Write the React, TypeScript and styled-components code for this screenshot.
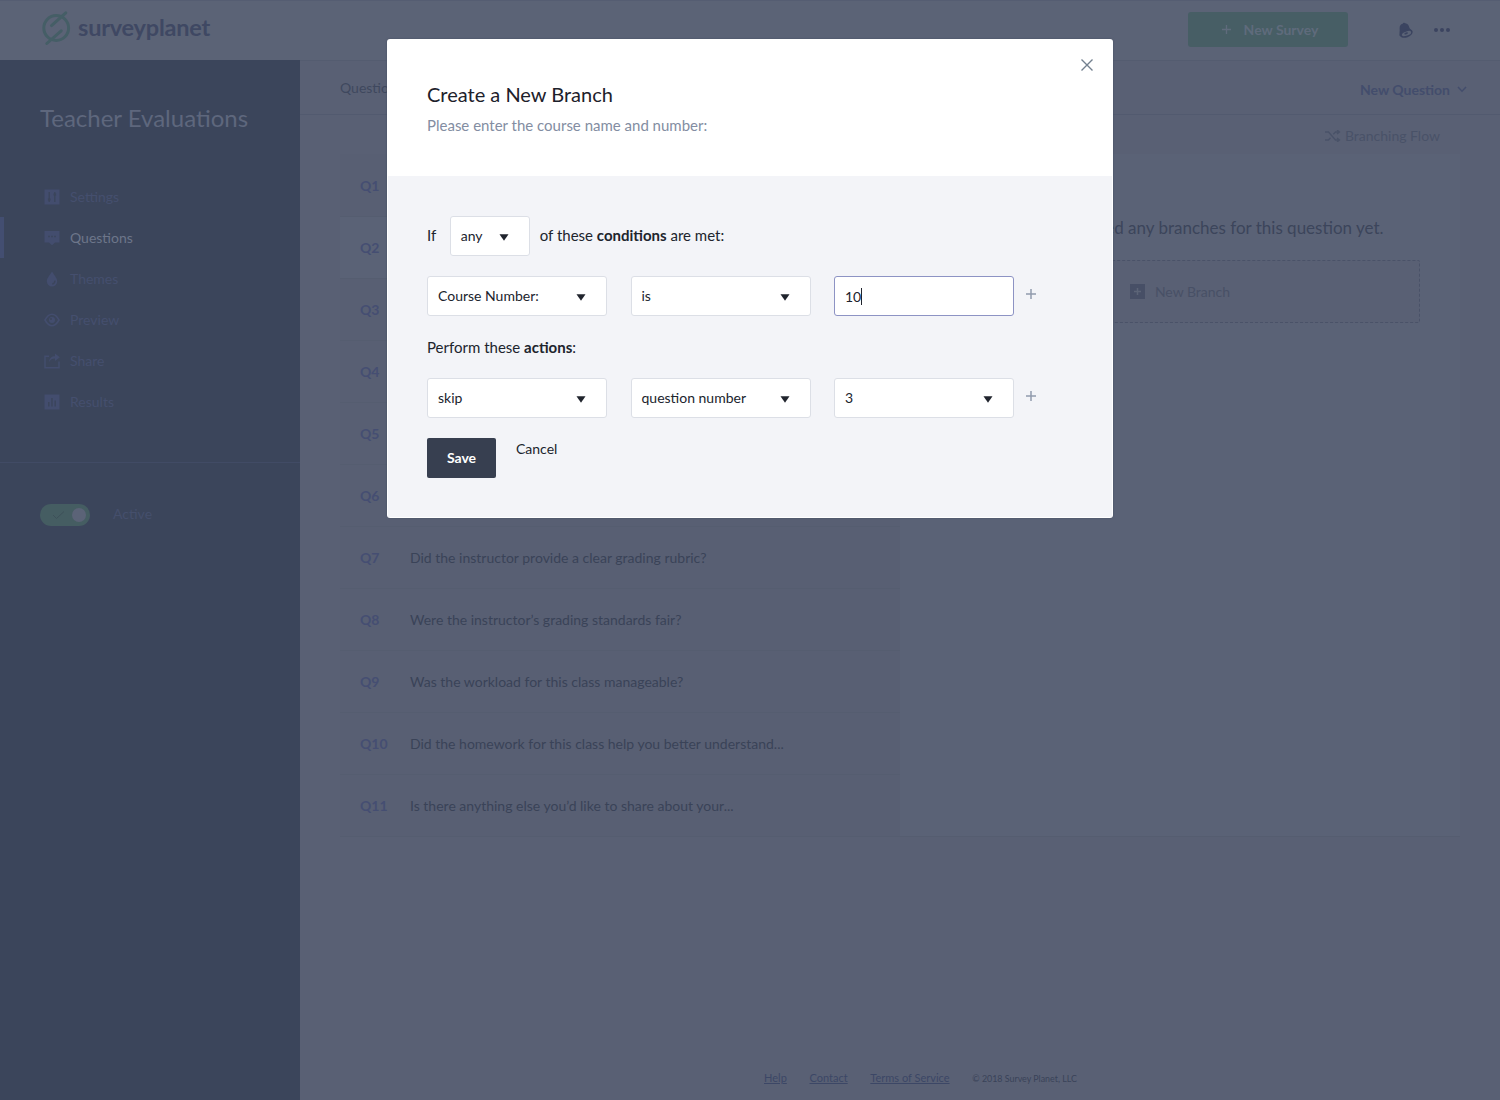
import React from 'react';
import styled, { createGlobalStyle } from 'styled-components';

const Global = createGlobalStyle`
  *, *::before, *::after { box-sizing: border-box; }
  html, body { margin: 0; padding: 0; }
  body {
    font-family: Lato, "Open Sans", sans-serif;
    font-size: 14px;
    line-height: 20px;
    color: #3d465c;
    overflow: hidden;
  }
  button, input { font: inherit; }
`;

const Page = styled.div`
  display: flex;
  flex-direction: column;
  width: 1500px;
  height: 1100px;
  background: #596074;
  position: relative;
  overflow: hidden;
`;

const TopBar = styled.header`
  display: flex;
  align-items: center;
  justify-content: space-between;
  flex: none;
  height: 60px;
  padding: 0 48px 0 40px;
  background: #5b6376;
  box-shadow: inset 0 1px 0 #555d72;
`;

const Brand = styled.div`
  display: flex;
  align-items: center;
  gap: 6px;
  padding-bottom: 4px;
`;

const BrandName = styled.span`
  padding-bottom: 3px;
  font-size: 23.5px;
  line-height: 30px;
  font-weight: 700;
  letter-spacing: -0.2px;
  color: #3f4863;
`;

const TopActions = styled.div`
  display: flex;
  align-items: center;
`;

const NewSurvey = styled.button`
  display: flex;
  align-items: center;
  justify-content: center;
  gap: 13px;
  width: 160px;
  height: 35px;
  margin: 0 50px 1px 0;
  padding: 0 0 0 4px;
  border: 0;
  border-radius: 3px;
  background: #475e65;
  color: #5f6b7c;
  font-weight: 700;
`;

const BellWrap = styled.span`
  display: flex;
  margin-right: 18px;
`;

const Body = styled.div`
  display: flex;
  flex: 1;
`;

const Sidebar = styled.aside`
  width: 300px;
  flex: none;
  background: #3b455b;
`;

const SurveyTitle = styled.h1`
  margin: 0;
  padding: 42px 40px 0;
  height: 116px;
  font-size: 24px;
  line-height: 32px;
  font-weight: 400;
  color: #5e677d;
`;

const Nav = styled.nav`
  display: flex;
  flex-direction: column;
  height: 287px;
  border-bottom: 1px solid #414b65;
`;

const NavItem = styled.a<{ $active?: boolean }>`
  display: flex;
  align-items: center;
  gap: 10px;
  height: 41px;
  padding-left: 40px;
  border-left: 4px solid ${(p) => (p.$active ? '#434e71' : 'transparent')};
  color: ${(p) => (p.$active ? '#6d768a' : '#454f6e')};

  svg { color: #434d6e; }
`;

const StatusRow = styled.div`
  display: flex;
  align-items: center;
  gap: 23px;
  padding: 41px 40px 0;
  color: #454f6c;
`;

const StatusText = styled.span`
  padding-bottom: 2px;
`;

const Toggle = styled.span`
  display: flex;
  align-items: center;
  justify-content: space-between;
  width: 50px;
  height: 22px;
  padding: 0 4px 0 12px;
  border-radius: 11px;
  background: #455d62;
`;

const Knob = styled.span`
  width: 14px;
  height: 14px;
  border-radius: 50%;
  background: #5b6377;
`;

const Main = styled.main`
  display: flex;
  flex-direction: column;
  flex: 1;
`;

const SubBar = styled.div`
  display: flex;
  align-items: center;
  justify-content: space-between;
  height: 55px;
  padding: 0 33px 0 40px;
  border-top: 1px solid #545c70;
  border-bottom: 1px solid #525a6f;
`;

const Crumb = styled.span`
  padding-top: 1px;
  color: #3f485e;
`;

const NewQuestion = styled.a`
  display: flex;
  align-items: center;
  gap: 7px;
  padding-top: 5px;
  font-weight: 700;
  color: #434d6c;

  svg { margin-bottom: 2px; }
`;

const FlowLink = styled.div`
  display: flex;
  align-items: center;
  justify-content: flex-end;
  gap: 4px;
  height: 39px;
  padding: 3px 60px 0 0;
  color: #495268;
`;

const Columns = styled.div`
  display: flex;
  height: 683px;
  margin: 0 40px;
`;

const List = styled.ul`
  width: 560px;
  margin: 0;
  padding: 1px 0 0;
  list-style: none;
  background: #585f73;
`;

const Question = styled.li<{ $selected?: boolean }>`
  display: flex;
  align-items: center;
  height: 62px;
  padding: 0 20px;
  background: ${(p) => (p.$selected ? '#5a6276' : '#585f73')};
  border-bottom: 1px solid #555d70;
  color: #3a4358;
`;

const Number = styled.b`
  width: 50px;
  color: #454e72;
`;

const Branches = styled.section`
  width: 560px;
  padding: 64px 40px 0;
  background: #5a6276;
  border-bottom: 1px solid #555d70;
`;

const Empty = styled.p`
  margin: 0 0 22px;
  font-size: 17px;
  line-height: 20px;
  text-align: center;
  white-space: nowrap;
  color: #3c455b;
`;

const NewBranch = styled.div`
  display: flex;
  align-items: center;
  justify-content: center;
  gap: 10px;
  height: 63px;
  border: 1px dashed #4a5268;
  border-radius: 2px;
  background: #596074;
  color: #485066;
`;

const Footer = styled.footer`
  display: flex;
  align-items: center;
  margin-top: auto;
  height: 44px;
  padding-left: 464px;
  gap: 22.7px;
  font-size: 11px;
  color: #3a4359;
`;

const FootLink = styled.a`
  color: #3c4766;
  text-decoration: underline;
`;

const Copy = styled.span`
  padding-top: 1px;
  font-size: 8.9px;
`;

const Overlay = styled.div`
  position: absolute;
  inset: 0;
  display: flex;
  align-items: flex-start;
  justify-content: center;
  padding-top: 39px;
`;

const Modal = styled.div`
  display: flex;
  flex-direction: column;
  width: 726px;
  height: 479px;
  overflow: hidden;
  border-radius: 3px;
  background: #fff;
  box-shadow: 0 0 2px #434c60;
  color: #20242d;
`;

const ModalHead = styled.div`
  display: flex;
  justify-content: space-between;
  height: 137px;
  padding: 0 20px 0 40px;
`;

const ModalTitle = styled.h2`
  margin: 42px 0 8px;
  font-size: 20px;
  line-height: 26px;
  font-weight: 400;
  color: #1d212b;
`;

const ModalText = styled.p`
  margin: 0;
  font-size: 15px;
  line-height: 20px;
  color: #838da2;
`;

const Close = styled.button`
  display: flex;
  align-self: flex-start;
  margin-top: 20px;
  padding: 0;
  border: 0;
  background: none;
  color: #73808f;
`;

const ModalBody = styled.div`
  flex: 1;
  margin: 0 1px 1px;
  padding: 40px 39px 0;
  background: #f3f4f8;
`;

const Line = styled.div<{ $gap: number }>`
  display: flex;
  align-items: center;
  gap: ${(p) => p.$gap}px;
  height: 40px;
`;

const Phrase = styled.span<{ $after?: number }>`
  margin-right: ${(p) => p.$after ?? 0}px;
  padding-bottom: 2px;
  font-size: 15px;
`;

const Select = styled.div<{ $width: number }>`
  display: flex;
  align-items: center;
  justify-content: space-between;
  width: ${(p) => p.$width}px;
  height: 40px;
  padding: 0 20px 0 10px;
  border: 1px solid #dcdfe6;
  border-radius: 3px;
  background: #fff;

  svg { margin-top: 2px; }
`;

const Field = styled.div`
  display: flex;
  align-items: center;
  width: 180px;
  height: 40px;
  padding: 1px 10px 0;
  border: 1px solid #8d93c4;
  border-radius: 3px;
  background: #fff;
`;

const Caret = styled.span`
  width: 1px;
  height: 17px;
  background: #20242d;
`;

const Add = styled.span`
  display: flex;
  margin: -4px 0 0 -12px;
  color: #919bad;
`;

const Spacer = styled.div`
  height: 20px;
`;

const Label = styled.div`
  height: 62px;
  padding-top: 21px;
  font-size: 15px;
`;

const Actions = styled.div`
  display: flex;
  gap: 20px;
  margin-top: 20px;
`;

const Save = styled.button`
  width: 69px;
  height: 40px;
  padding: 0;
  border: 0;
  border-radius: 2px;
  background: #373f50;
  color: #fff;
  font-weight: 700;
`;

const Cancel = styled.a`
  padding-top: 1px;
`;

const Logo = () => (
  <svg width="32" height="36" viewBox="0 0 32 36" fill="none" stroke="#455e66" strokeWidth="3" strokeLinecap="round">
    <circle cx="16.200" cy="18" r="12.400" />
    <path d="M25.800 2.800 11.500 15.600M6.800 33.500 21.200 20.800" />
  </svg>
);

const Bell = () => (
  <svg width="16" height="16" viewBox="0 0 16 16" fill="#3b4460">
    <path d="M1.800 14C1 11.500 2 9 1.600 6.500 1.400 4 2.800 2.300 4.600 1.800 4.900.6 6.800.2 7.300 1.300 9.500 1.500 10.800 3.300 11.200 5.300 11.700 7.300 13.700 7.800 14.400 9.200L10 12Z" />
    <ellipse cx="8.200" cy="11.500" rx="6.700" ry="3.900" transform="rotate(-20 8.200 11.500)" />
    <ellipse cx="8.500" cy="11.600" rx="4.900" ry="2.100" transform="rotate(-20 8.500 11.600)" fill="#5b6376" />
    <ellipse cx="8.200" cy="11.400" rx="1.900" ry="1" transform="rotate(-20 8.200 11.400)" />
  </svg>
);

const Dots = () => (
  <svg width="20" height="6" viewBox="0 0 20 6" fill="#3b4460">
    <circle cx="4" cy="3" r="2" />
    <circle cx="10" cy="3" r="2" />
    <circle cx="16" cy="3" r="2" />
  </svg>
);

const Plus = ({ size, stroke = 1.5 }: { size: number; stroke?: number }) => (
  <svg width={size} height={size} viewBox="0 0 10 10" stroke="currentColor" strokeWidth={stroke}>
    <path d="M5 0V10M0 5H10" />
  </svg>
);

const Down = () => (
  <svg width="10" height="7" viewBox="0 0 10 7" fill="#20242d">
    <path d="M.5.3h9L5 6.800z" />
  </svg>
);

const cut = '#3b455b';

const icons: Record<string, React.ReactNode> = {
  Settings: (
    <>
      <rect x=".5" y=".5" width="15" height="15" fill="currentColor" />
      <path d="M5.200 3V13M10.800 3V13" stroke={cut} strokeWidth="1.300" />
      <path d="M3.900 10.500H6.500M9.500 5.500H12.100" stroke={cut} strokeWidth="1.800" />
    </>
  ),
  Questions: (
    <>
      <path d="M.5 1H15.500V12.500H11L8 15.300 5 12.500H.5Z" fill="currentColor" />
      <path d="M4.200 6.500h1.600M7.200 6.500h1.600M10.200 6.500h1.600" stroke={cut} strokeWidth="1.600" />
    </>
  ),
  Themes: (
    <>
      <path d="M8 .5C10 4 13.200 7 13.200 10.200A5.200 5.200 0 0 1 2.800 10.200C2.800 7 6 4 8 .5Z" fill="currentColor" />
      <path d="M11 9.500C11 11.500 10 12.700 8.300 13" stroke={cut} strokeWidth="1.300" fill="none" />
    </>
  ),
  Preview: (
    <>
      <path d="M1 8C3.200 4 5.500 2.300 8 2.300S12.800 4 15 8C12.800 12 10.500 13.700 8 13.700S3.200 12 1 8Z" fill="none" stroke="currentColor" strokeWidth="1.600" />
      <circle cx="8" cy="8" r="3" fill="currentColor" />
      <circle cx="7" cy="7" r="1" fill={cut} />
    </>
  ),
  Share: (
    <>
      <path d="M5 3.200H1V14.700H15V8.500" fill="none" stroke="currentColor" strokeWidth="1.500" />
      <path d="M5 9C5.500 5 7.500 3.200 11 3.200V.5L15.800 4.300 11 8V5.500C8 5.500 6.500 6.500 5 9Z" fill="currentColor" />
    </>
  ),
  Results: (
    <>
      <rect x=".5" y=".5" width="15" height="15" fill="currentColor" />
      <path d="M4.800 8V12.500M8 4V12.500M11.200 6.500V12.500" stroke={cut} strokeWidth="1.400" />
    </>
  ),
};

const questions = [
  '', '', '', '', '', '',
  'Did the instructor provide a clear grading rubric?',
  'Were the instructor’s grading standards fair?',
  'Was the workload for this class manageable?',
  'Did the homework for this class help you better understand...',
  'Is there anything else you’d like to share about your...',
];

export default function App() {
  return (
    <>
      <Global />
      <Page>
        <TopBar>
          <Brand>
            <Logo />
            <BrandName>surveyplanet</BrandName>
          </Brand>
          <TopActions>
            <NewSurvey>
              <Plus size={9} />
              New Survey
            </NewSurvey>
            <BellWrap><Bell /></BellWrap>
            <Dots />
          </TopActions>
        </TopBar>
        <Body>
          <Sidebar>
            <SurveyTitle>Teacher Evaluations</SurveyTitle>
            <Nav>
              {Object.keys(icons).map((name) => (
                <NavItem key={name} $active={name === 'Questions'}>
                  <svg width="16" height="16" viewBox="0 0 16 16">{icons[name]}</svg>
                  {name}
                </NavItem>
              ))}
            </Nav>
            <StatusRow>
              <Toggle>
                <svg width="14" height="10" viewBox="0 0 14 10" fill="none" stroke="#3d5059">
                  <path d="M1 5 4.500 8.500 12 1.500" />
                </svg>
                <Knob />
              </Toggle>
              <StatusText>Active</StatusText>
            </StatusRow>
          </Sidebar>
          <Main>
            <SubBar>
              <Crumb>Questions</Crumb>
              <NewQuestion>
                New Question
                <svg width="10" height="7" viewBox="0 0 10 7" fill="none" stroke="currentColor" strokeWidth="1.500">
                  <path d="M1 1 5 5.200 9 1" />
                </svg>
              </NewQuestion>
            </SubBar>
            <FlowLink>
              <svg width="16" height="12" viewBox="0 0 16 12" fill="none" stroke="currentColor" strokeWidth="1.300">
                <path d="M0 2H3.500L10.500 10H14M0 10H3.500L5.500 7.800M8.300 4.300 10.500 2H14M12 0 14.500 2 12 4M12 8 14.500 10 12 12" />
              </svg>
              Branching Flow
            </FlowLink>
            <Columns>
              <List>
                {questions.map((text, i) => (
                  <Question key={i} $selected={i === 1}>
                    <Number>Q{i + 1}</Number>
                    {text}
                  </Question>
                ))}
              </List>
              <Branches>
                <Empty>You have not added any branches for this question yet.</Empty>
                <NewBranch>
                  <svg width="15" height="15" viewBox="0 0 15 15">
                    <rect width="15" height="15" fill="#474f66" />
                    <path d="M7.500 4V11M4 7.500H11" stroke="#5c6477" strokeWidth="1.500" />
                  </svg>
                  New Branch
                </NewBranch>
              </Branches>
            </Columns>
            <Footer>
              <FootLink>Help</FootLink>
              <FootLink>Contact</FootLink>
              <FootLink>Terms of Service</FootLink>
              <Copy>© 2018 Survey Planet, LLC</Copy>
            </Footer>
          </Main>
        </Body>
        <Overlay>
          <Modal role="dialog">
            <ModalHead>
              <div>
                <ModalTitle>Create a New Branch</ModalTitle>
                <ModalText>Please enter the course name and number:</ModalText>
              </div>
              <Close aria-label="Close">
                <svg width="12" height="12" viewBox="0 0 12 12" stroke="currentColor" strokeWidth="1.400">
                  <path d="M.5.5 11.500 11.500M11.500.5.5 11.500" />
                </svg>
              </Close>
            </ModalHead>
            <ModalBody>
              <Line $gap={10}>
                <Phrase $after={3.5}>If</Phrase>
                <Select $width={80}>any<Down /></Select>
                <Phrase>of these <b>conditions</b> are met:</Phrase>
              </Line>
              <Spacer />
              <Line $gap={23.5}>
                <Select $width={180}>Course Number:<Down /></Select>
                <Select $width={180}>is<Down /></Select>
                <Field>10<Caret /></Field>
                <Add><Plus size={10} /></Add>
              </Line>
              <Label>Perform these <b>actions</b>:</Label>
              <Line $gap={23.5}>
                <Select $width={180}>skip<Down /></Select>
                <Select $width={180}>question number<Down /></Select>
                <Select $width={180}>3<Down /></Select>
                <Add><Plus size={10} /></Add>
              </Line>
              <Actions>
                <Save>Save</Save>
                <Cancel>Cancel</Cancel>
              </Actions>
            </ModalBody>
          </Modal>
        </Overlay>
      </Page>
    </>
  );
}
